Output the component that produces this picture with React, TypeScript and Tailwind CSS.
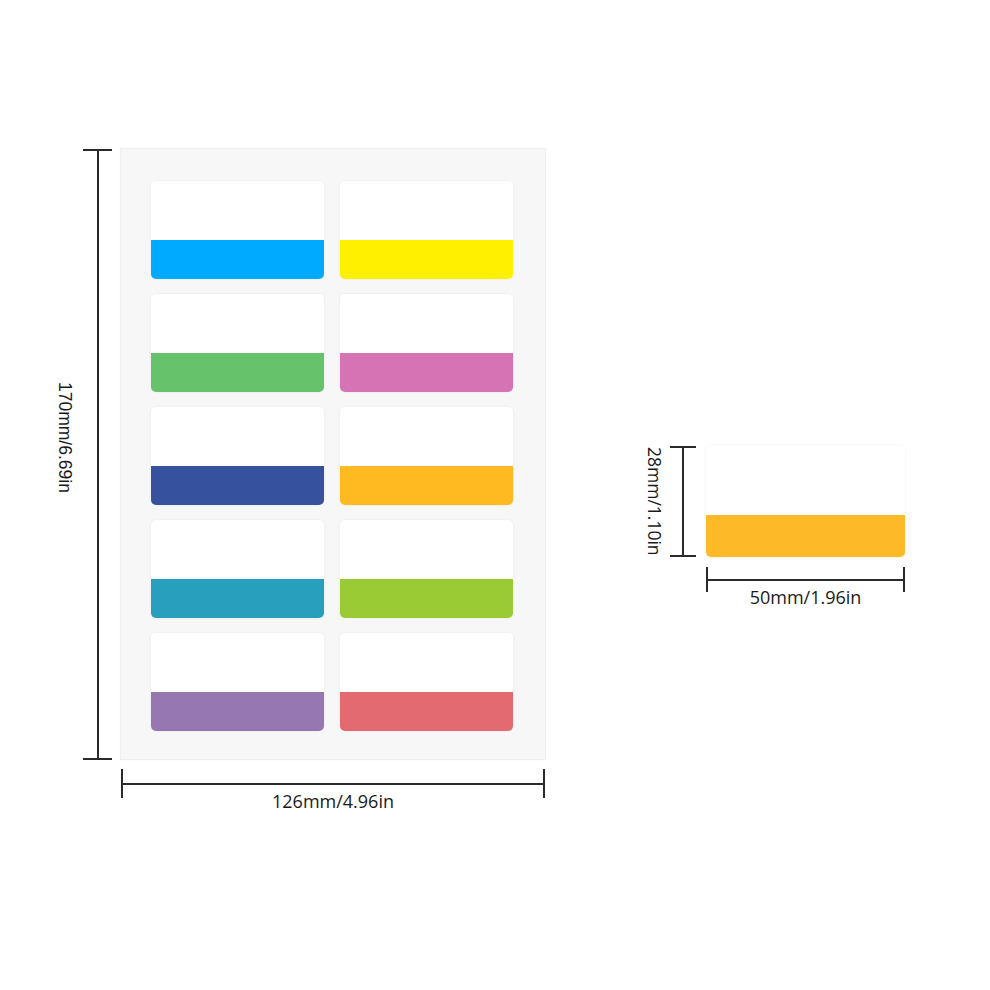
import React from 'react';

const sheetColors = [
  '#00aaff', '#fff000',
  '#66c36b', '#d673b4',
  '#36519d', '#ffb921',
  '#279fbd', '#9acb35',
  '#9677b1', '#e36a71',
];

function VDim({ className }: { className: string }) {
  return (
    <div className={`flex flex-col items-center ${className}`}>
      <div className="h-[2px] w-full bg-[#2a2a2a]" />
      <div className="w-[2px] flex-1 bg-[#2a2a2a]" />
      <div className="h-[2px] w-full bg-[#2a2a2a]" />
    </div>
  );
}

function HDim({ className }: { className: string }) {
  return (
    <div className={`flex flex-row items-center ${className}`}>
      <div className="w-[2px] h-full bg-[#2a2a2a]" />
      <div className="h-[2px] flex-1 bg-[#2a2a2a]" />
      <div className="w-[2px] h-full bg-[#2a2a2a]" />
    </div>
  );
}

function Label({ color, band }: { color: string; band: string }) {
  return (
    <div className="flex flex-col rounded-[5px] overflow-hidden bg-white shadow-[0_0_2px_rgba(0,0,0,0.09)] h-full">
      <div className="flex-1 bg-white" />
      <div className={band} style={{ background: color }} />
    </div>
  );
}

export default function App() {
  return (
    <div className="w-[990px] h-[990px] bg-white flex items-start pl-[57px] pt-[148px] text-[#1a1a1a]">
      {/* sheet of labels */}
      <div className="flex flex-row items-start">
        <div className="w-[16px] h-[612px] flex flex-col justify-center items-center pb-[34px]">
          <span className="[writing-mode:vertical-rl] text-[17.5px] leading-[16px] font-['Liberation_Sans',Arial,sans-serif] whitespace-nowrap">
            170mm/6.69in
          </span>
        </div>
        <VDim className="ml-[10px] w-[29px] h-[611px] mt-[1px]" />
        <div className="ml-[8px] flex flex-col">
          <div className="w-[426px] h-[612px] bg-[#f7f7f7] border border-[#efefef] shadow-[0_0_3px_rgba(0,0,0,0.04)] pt-[32px] pl-[30px]">
            <div className="grid grid-cols-[173px_173px] auto-rows-[98px] gap-x-[16px] gap-y-[15px]">
              {sheetColors.map((c, i) => (
                <Label key={i} color={c} band="h-[39px]" />
              ))}
            </div>
          </div>
          <HDim className="ml-[1px] w-[424px] h-[29px] mt-[9px]" />
          <span className="-mt-[8px] text-center text-[18px] leading-[23px] font-['Open_Sans','Noto_Sans',sans-serif]">
            126mm/4.96in
          </span>
        </div>
      </div>

      {/* single label */}
      <div className="ml-[101px] mt-[297px] flex flex-row items-start">
        <div className="w-[16px] h-[112px] flex flex-col justify-center items-center">
          <span className="[writing-mode:vertical-rl] text-[17.5px] leading-[16px] font-['Open_Sans','Noto_Sans',sans-serif] whitespace-nowrap">
            28mm/1.10in
          </span>
        </div>
        <VDim className="ml-[7px] w-[26px] h-[111px] mt-[1px]" />
        <div className="ml-[10px] flex flex-col">
          <div className="w-[199px] h-[112px]">
            <Label color="#fdb927" band="h-[42px]" />
          </div>
          <HDim className="w-[199px] h-[25px] mt-[10px]" />
          <span className="-mt-[6px] text-center text-[18px] leading-[23px] font-['Open_Sans','Noto_Sans',sans-serif]">
            50mm/1.96in
          </span>
        </div>
      </div>
    </div>
  );
}
